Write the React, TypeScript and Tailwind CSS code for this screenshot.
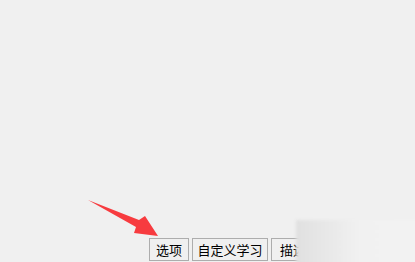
export default function App() {
  return (
    <div className="relative h-[262px] w-[415px] overflow-hidden bg-[#f0f0f0] font-['Noto_Sans_CJK_SC',sans-serif] text-[13px] text-black">
      <div className="flex h-full flex-col justify-end pb-[1px]">
        <div className="flex gap-[3px] pl-[149px]">
          <button className="h-[23px] w-[40px] border border-[#adadad] bg-[#f0f0f0] leading-none">选项</button>
          <button className="h-[23px] w-[76px] border border-[#adadad] bg-[#f0f0f0] leading-none">自定义学习</button>
          <button className="h-[23px] w-[44px] border border-[#adadad] bg-[#f0f0f0] leading-none">描述</button>
        </div>
      </div>

      {/* blurred watermark patch */}
      <div className="absolute left-[296px] top-[220px] h-[50px] w-[130px] bg-gradient-to-r from-[#e0e0e0] via-[#f1f1f1] to-[#f2f2f2] blur-[1.5px]" />

      {/* red arrow */}
      <svg className="absolute left-0 top-0" width="415" height="262" viewBox="0 0 415 262">
        <polygon points="88,200 139,220 145,216 158,236 134,233 136,227" fill="#f73b3f" />
      </svg>
    </div>
  );
}
